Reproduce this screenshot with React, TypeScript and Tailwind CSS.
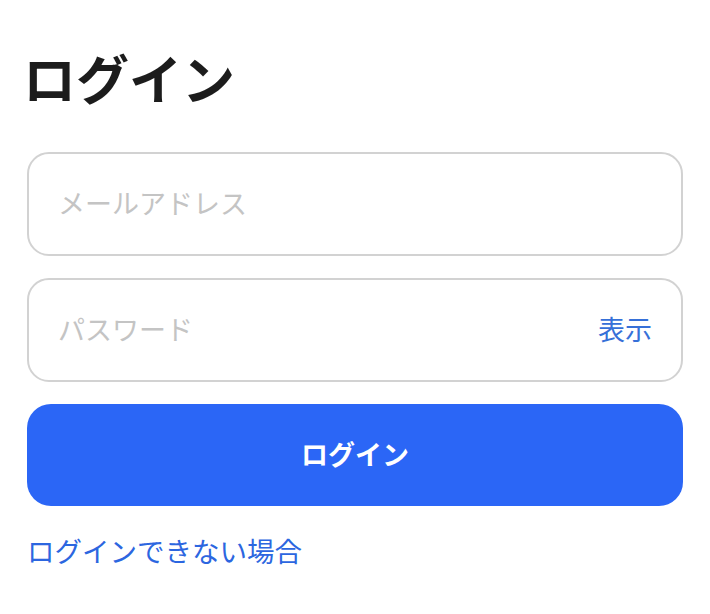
export default function App() {
  return (
    <div
      className="min-h-screen bg-white px-[27px] pt-[46px]"
      style={{ fontFamily: '"Noto Sans CJK JP", "Noto Sans", sans-serif' }}
    >
      <h1 className="-ml-[4px] text-[53px] font-bold leading-[1.2] text-[#1c1c1c]">ログイン</h1>

      <div className="mt-[42px] flex flex-col gap-[22px]">
        <div className="flex h-[104px] items-center rounded-[22px] border-2 border-[#d2d2d2] px-[29px]">
          <span className="text-[27px] text-[#c4c4c4]">メールアドレス</span>
        </div>
        <div className="flex h-[104px] items-center justify-between rounded-[22px] border-2 border-[#d2d2d2] px-[29px]">
          <span className="text-[27px] text-[#c4c4c4]">パスワード</span>
          <span className="text-[27px] text-[#3670d8]">表示</span>
        </div>
        <button className="flex h-[102px] items-center justify-center rounded-[24px] bg-[#2b66f6] text-[27px] font-bold text-white">
          ログイン
        </button>
      </div>

      <div className="mt-[24px] text-[27.5px] text-[#2c66e0]">ログインできない場合</div>
    </div>
  );
}
